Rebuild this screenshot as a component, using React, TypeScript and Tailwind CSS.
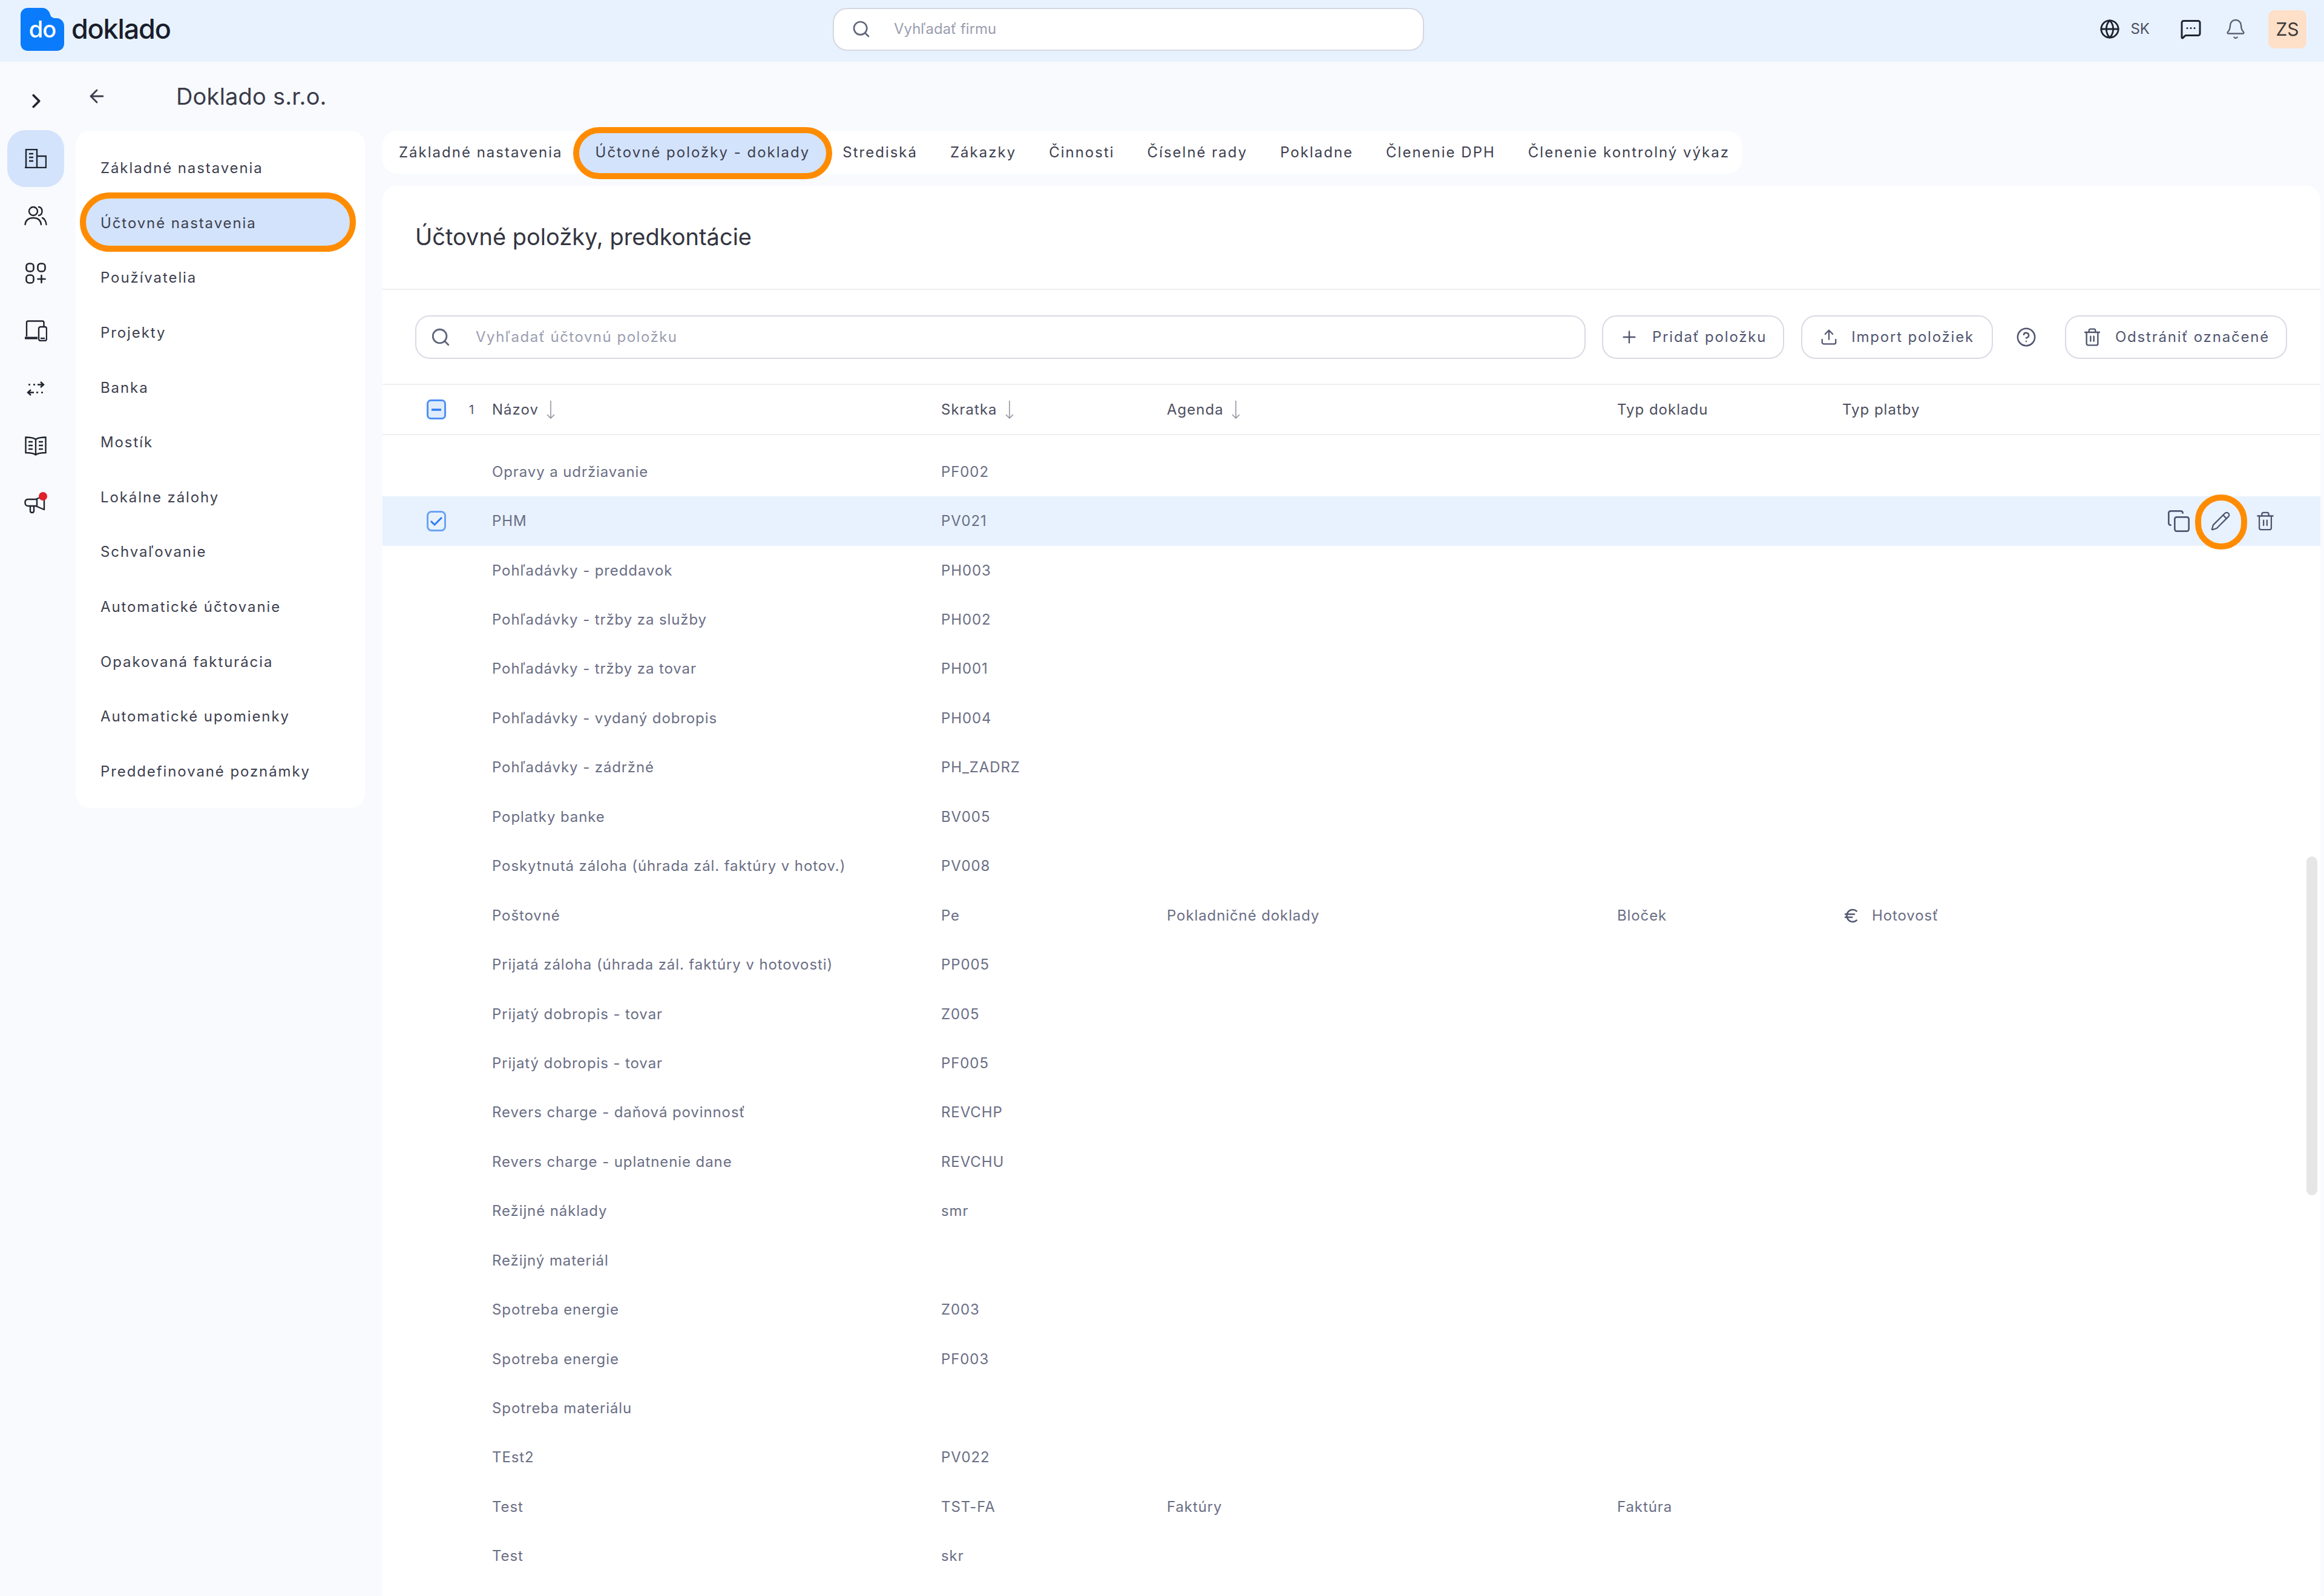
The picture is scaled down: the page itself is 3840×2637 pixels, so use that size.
import { ArrowLeft, Bell, ChevronRight, CircleHelp, Copy, Euro, Globe, MessageSquareMore, Pencil, Plus, Search, Trash2, Upload } from 'lucide-react'
import type { ReactNode } from 'react'

const navItems = ['Základné nastavenia', 'Účtovné nastavenia', 'Používatelia', 'Projekty', 'Banka', 'Mostík', 'Lokálne zálohy', 'Schvaľovanie', 'Automatické účtovanie', 'Opakovaná fakturácia', 'Automatické upomienky', 'Preddefinované poznámky']
const tabs = ['Základné nastavenia', 'Účtovné položky - doklady', 'Strediská', 'Zákazky', 'Činnosti', 'Číselné rady', 'Pokladne', 'Členenie DPH', 'Členenie kontrolný výkaz']

interface Row {
  name: string
  code?: string
  agenda?: string
  docType?: string
  payment?: string
  selected?: boolean
}

const rows: Row[] = [
  { name: 'Opravy a udržiavanie', code: 'PF002' },
  { name: 'PHM', code: 'PV021', selected: true },
  { name: 'Pohľadávky - preddavok', code: 'PH003' },
  { name: 'Pohľadávky - tržby za služby', code: 'PH002' },
  { name: 'Pohľadávky - tržby za tovar', code: 'PH001' },
  { name: 'Pohľadávky - vydaný dobropis', code: 'PH004' },
  { name: 'Pohľadávky - zádržné', code: 'PH_ZADRZ' },
  { name: 'Poplatky banke', code: 'BV005' },
  { name: 'Poskytnutá záloha (úhrada zál. faktúry v hotov.)', code: 'PV008' },
  { name: 'Poštovné', code: 'Pe', agenda: 'Pokladničné doklady', docType: 'Bloček', payment: 'Hotovosť' },
  { name: 'Prijatá záloha (úhrada zál. faktúry v hotovosti)', code: 'PP005' },
  { name: 'Prijatý dobropis - tovar', code: 'Z005' },
  { name: 'Prijatý dobropis - tovar', code: 'PF005' },
  { name: 'Revers charge - daňová povinnosť', code: 'REVCHP' },
  { name: 'Revers charge - uplatnenie dane', code: 'REVCHU' },
  { name: 'Režijné náklady', code: 'smr' },
  { name: 'Režijný materiál' },
  { name: 'Spotreba energie', code: 'Z003' },
  { name: 'Spotreba energie', code: 'PF003' },
  { name: 'Spotreba materiálu' },
  { name: 'TEst2', code: 'PV022' },
  { name: 'Test', code: 'TST-FA', agenda: 'Faktúry', docType: 'Faktúra' },
  { name: 'Test', code: 'skr' },
]

function Logo() {
  return (
    <div className="relative w-[72px] h-[71px] flex items-center justify-center">
      <svg className="absolute inset-0" width="72" height="71" viewBox="0 0 72 71">
        <path d="M12 0H36C42 0 47 4 49 11C50 15 53 17 59 17C67 17 72 23 72 30V59C72 66 67 71 60 71H12C5 71 0 66 0 59V12C0 5 5 0 12 0Z" fill="#0a7bfb" />
      </svg>
      <span className="relative text-white text-[38px] font-medium tracking-[-1px]">do</span>
    </div>
  )
}

function BuildingIcon() {
  return (
    <svg width="36" height="32" viewBox="0 0 36 32" fill="none" stroke="#1f2430" strokeWidth="2.4">
      <path d="M2 31V1H20V31M20 12H35V31M0 31H36" />
      <path d="M7 8H14M7 14H14M7 20H14" />
    </svg>
  )
}

function UsersIcon() {
  return (
    <svg width="38" height="33" viewBox="0 0 38 33" fill="none" stroke="#1f2430" strokeWidth="2.4" strokeLinecap="round">
      <circle cx="15" cy="9" r="7" />
      <path d="M24 2C28 2.500 29.500 5.500 29.500 9C29.500 12.500 28 15.500 24 16" />
      <path d="M1.500 31C2.500 23 8 20 15 20C22 20 27 23 28 31" />
      <path d="M30 20C33.500 21 36 26 36.500 31" />
    </svg>
  )
}

function AppsIcon() {
  return (
    <svg width="34" height="35" viewBox="0 0 34 35" fill="none" stroke="#1f2430" strokeWidth="2.6" strokeLinecap="round">
      <rect x="1.500" y="1.500" width="12" height="13" rx="4.500" />
      <rect x="20.500" y="1.500" width="12" height="13" rx="4.500" />
      <rect x="1.500" y="20.500" width="12" height="13" rx="4.500" />
      <path d="M26.500 21V33M20.500 27H32.500" />
    </svg>
  )
}

function DevicesIcon() {
  return (
    <svg width="38" height="35" viewBox="0 0 38 35" fill="none" stroke="#1f2430" strokeWidth="2.4">
      <path d="M4 27V4C4 2.500 5 1.500 6.500 1.500H30C31.500 1.500 32.500 2.500 32.500 4V10" />
      <path d="M1 29.500H22" strokeWidth="4" />
      <rect x="24" y="11" width="13" height="23" rx="3" />
      <path d="M27 30H34" />
    </svg>
  )
}

function TransferIcon() {
  return (
    <svg width="30" height="24" viewBox="0 0 30 24" fill="none" stroke="#1f2430" strokeWidth="2.4">
      <path d="M3 5.500H6M11 5.500H14M18 5.500H28M23 1L28 5.500L23 10" />
      <path d="M27 18.500H24M19 18.500H16M12 18.500H2M7 14L2 18.500L7 23" />
    </svg>
  )
}

function BookIcon() {
  return (
    <svg width="36" height="32" viewBox="0 0 36 32" fill="none" stroke="#1f2430" strokeWidth="2.400">
      <path d="M18 5C14 2 8 1.500 1.500 1.500V27C8 27 14 27.500 18 30.500C22 27.500 28 27 34.500 27V1.500C28 1.500 22 2 18 5Z" />
      <path d="M18 5V30M6 9H13M6 15H13M6 21H13M23 9H30M23 15H30M23 21H30" />
    </svg>
  )
}

function MegaphoneIcon() {
  return (
    <div className="relative w-[38px] h-[37px]">
      <svg width="36" height="34" viewBox="0 0 36 34" fill="none" stroke="#1f2430" strokeWidth="2.4" strokeLinejoin="round" className="absolute left-0 top-[3px]">
        <path d="M6 9H19L33 3V26L19 20H6C3 20 1.500 17.500 1.500 14.500C1.500 11.500 3 9 6 9Z" />
        <path d="M10 20V28C10 30 11 31 13 31C15 31 16 30 16 28V20M21 9V20" />
      </svg>
      <span className="absolute right-0 top-0 w-[14px] h-[14px] rounded-full bg-[#e0212b]" />
    </div>
  )
}

function SortArrow() {
  return (
    <svg width="14" height="30" viewBox="0 0 14 30" fill="none" stroke="#8d8f9b" strokeWidth="1.5">
      <path d="M7 0V29M1 23L7 29L13 23" />
    </svg>
  )
}

function CheckMinus() {
  return (
    <span className="w-[32px] h-[33px] rounded-[7px] border-[3px] border-[#4d90f5] bg-[#e0ecfd] flex items-center justify-center">
      <svg width="20" height="20" viewBox="0 0 20 20" fill="none" stroke="#2f7cf0" strokeWidth="3.5">
        <path d="M2 10H18" />
      </svg>
    </span>
  )
}

function CheckTick() {
  return (
    <span className="w-[32px] h-[34px] rounded-[8px] border-[3px] border-[#6ba3f7] flex items-center justify-center">
      <svg width="22" height="20" viewBox="0 0 22 20" fill="none" stroke="#2f7cf0" strokeWidth="3">
        <path d="M2 10L8 16L20 4" />
      </svg>
    </span>
  )
}

function OutlineButton({ icon, children, wide }: { icon: ReactNode; children: ReactNode; wide?: boolean }) {
  return (
    <div className={`h-[72px] rounded-[24px] border-2 border-[#d9dae4] bg-white flex items-center gap-[22px] text-[24px] text-[#50556f] tracking-[1.8px] whitespace-nowrap ${wide ? 'px-[29px]' : 'px-[27px]'}`}>
      {icon}
      {children}
    </div>
  )
}

function HeadCell({ children, sort }: { children: ReactNode; sort?: boolean }) {
  return (
    <div className="flex items-center gap-[13px] text-[24px] text-[#4c4e5e] tracking-[1px]">
      {children}
      {sort && <SortArrow />}
    </div>
  )
}

function RailSlot({ children }: { children: ReactNode }) {
  return <div className="h-[95px] flex items-center justify-center">{children}</div>
}

const gridCols = 'grid grid-cols-[181px_742px_373px_744px_372px_1fr] items-center'

export default function App() {
  return (
    <div className="w-[3840px] h-[2637px] overflow-hidden bg-[#f8fafd] font-['Inter',sans-serif]">
      {/* top bar */}
      <header className="h-[102px] bg-[#e8f2fe] flex items-center pl-[34px] pr-[29px] pb-[6px]">
        <div className="w-[1342px] flex items-center gap-[12px]">
          <Logo />
          <span className="text-[45px] font-medium text-[#1a1d2b] tracking-[-1.2px]">doklado</span>
        </div>
        <div className="w-[977px] h-[71px] rounded-[24px] bg-white border-2 border-[#d5d7e2] flex items-center pl-[29px] gap-[38px]">
          <Search size={32} strokeWidth={2} className="text-[#62667c]" />
          <span className="text-[24px] text-[#9a9db0]">Vyhľadať firmu</span>
        </div>
        <div className="ml-auto flex items-center">
          <Globe size={34} strokeWidth={2} className="text-[#1f2430]" />
          <span className="ml-[17px] text-[24px] text-[#4c4e5e]">SK</span>
          <MessageSquareMore size={36} strokeWidth={2} className="ml-[50px] text-[#1f2430]" />
          <Bell size={36} strokeWidth={1.6} className="ml-[38px] text-[#5b6075]" />
          <div className="ml-[36px] w-[63px] h-[63px] rounded-[10px] bg-[#fedfc8] flex items-center justify-center text-[30px] text-[#3a3a3a]">ZS</div>
        </div>
      </header>

      <div className="flex">
        {/* icon rail */}
        <aside className="w-[125px] shrink-0 flex flex-col items-center pt-[46px]">
          <ChevronRight size={38} strokeWidth={2.4} className="text-[#1f2430] -ml-[6px]" />
          <div className="mt-[29px] -ml-[8px] w-[94px] h-[94px] rounded-[30px] bg-[#d3e3fb] flex items-center justify-center">
            <BuildingIcon />
          </div>
          <div className="flex flex-col items-center -ml-[8px]">
            <RailSlot><UsersIcon /></RailSlot>
            <RailSlot><AppsIcon /></RailSlot>
            <RailSlot><DevicesIcon /></RailSlot>
            <RailSlot><TransferIcon /></RailSlot>
            <RailSlot><BookIcon /></RailSlot>
            <RailSlot><MegaphoneIcon /></RailSlot>
          </div>
        </aside>

        <div className="flex-1 min-w-0 pr-[6px]">
          {/* company heading */}
          <div className="h-[114px] flex items-center gap-[114px] pl-[18px]">
            <ArrowLeft size={34} strokeWidth={2} className="text-[#3a3d4c]" />
            <h1 className="text-[38px] text-[#3a3c4a] tracking-[0.2px] font-normal">Doklado s.r.o.</h1>
          </div>

          <div className="flex gap-[29px] items-start">
            {/* settings nav */}
            <nav className="w-[478px] shrink-0 bg-white rounded-[24px] pt-[17px] pb-[15px]">
              {navItems.map((item, i) => (
                <div key={item} className="relative h-[90.6px] flex items-center px-[41px] text-[24px] text-[#3d3f4f] tracking-[1.9px] whitespace-nowrap">
                  {i === 1 && (
                    <span className="absolute left-[7px] right-[15px] top-[-6px] bottom-[-2px] rounded-[50px] border-[10px] border-[#ff8c00] bg-[#d3e3fb]" />
                  )}
                  <span className="relative">{item}</span>
                </div>
              ))}
            </nav>

            <div className="flex-1 min-w-0">
              {/* tabs */}
              <div className="w-[2246px] h-[71px] bg-white rounded-[24px] flex items-center text-[24px] text-[#3d3f4f] tracking-[2px]">
                {tabs.map((tab, i) => (
                  <div key={tab} className="relative h-full flex items-center px-[27px] whitespace-nowrap">
                    {i === 1 && (
                      <span className="absolute left-[-10px] right-[-10px] top-[-6px] bottom-[-9px] rounded-[44px] border-[10px] border-[#ff8c00] bg-[#d3e3fb]" />
                    )}
                    <span className="relative">{tab}</span>
                  </div>
                ))}
              </div>

              {/* main panel */}
              <section className="relative mt-[20px] h-[2330px] bg-white rounded-t-[24px] overflow-hidden">
                <div className="h-[172px] flex items-center pl-[54px] pb-[2px] border-b-2 border-[#eeeff3]">
                  <h2 className="text-[38px] text-[#33353f] font-normal">Účtovné položky, predkontácie</h2>
                </div>
                <div className="h-[157px] flex items-center pl-[54px] pr-[55px] border-b-2 border-[#eeeff3]">
                  <div className="w-[1934px] h-[72px] rounded-[24px] border-2 border-[#d9dae4] flex items-center pl-[23px] gap-[41px]">
                    <Search size={34} strokeWidth={2} className="text-[#62667c]" />
                    <span className="text-[24px] text-[#9a9db0] tracking-[1.5px]">Vyhľadať účtovnú položku</span>
                  </div>
                  <div className="ml-[27px]">
                    <OutlineButton icon={<Plus size={32} strokeWidth={1.8} />}>Pridať položku</OutlineButton>
                  </div>
                  <div className="ml-[28px]">
                    <OutlineButton wide icon={<Upload size={30} strokeWidth={1.8} />}>Import položiek</OutlineButton>
                  </div>
                  <CircleHelp size={34} strokeWidth={1.8} className="ml-[38px] text-[#50556f]" />
                  <div className="ml-auto">
                    <OutlineButton icon={<Trash2 size={32} strokeWidth={1.8} />}>Odstrániť označené</OutlineButton>
                  </div>
                </div>

                {/* table head */}
                <div className={`${gridCols} h-[83px] border-b-2 border-[#eeeff3]`}>
                  <div className="flex items-center pl-[73px] gap-[38px]">
                    <CheckMinus />
                    <span className="text-[20px] text-[#4c4e5e]">1</span>
                  </div>
                  <HeadCell sort>Názov</HeadCell>
                  <HeadCell sort>Skratka</HeadCell>
                  <HeadCell sort>Agenda</HeadCell>
                  <HeadCell>Typ dokladu</HeadCell>
                  <HeadCell>Typ platby</HeadCell>
                </div>

                {/* table rows */}
                <div className="pt-[20px]">
                  {rows.map((row, i) => (
                    <div key={i} className={`${gridCols} h-[81.45px] text-[24px] text-[#6a6e85] tracking-[0.9px] ${row.selected ? 'bg-[#e8f2fe]' : ''}`}>
                      <div className="pl-[73px] flex items-center">
                        {row.selected && <CheckTick />}
                      </div>
                      <div className="whitespace-nowrap">{row.name}</div>
                      <div>{row.code}</div>
                      <div>{row.agenda}</div>
                      <div>{row.docType}</div>
                      <div className="flex items-center h-full">
                        {row.payment && (
                          <span className="flex items-center gap-[19px]">
                            <Euro size={30} strokeWidth={2} className="text-[#50556f]" />
                            {row.payment}
                          </span>
                        )}
                        {row.selected && (
                          <div className="ml-auto mr-[74px] flex items-center text-[#50556f]">
                            <Copy size={40} strokeWidth={1.6} />
                            <span className="relative ml-[32px]">
                              <Pencil size={34} strokeWidth={1.6} />
                              <span className="absolute left-[-25px] top-[-27px] w-[86px] h-[91px] rounded-full border-[10px] border-[#ff8c00]" />
                            </span>
                            <Trash2 size={34} strokeWidth={1.6} className="ml-[40px]" />
                          </div>
                        )}
                      </div>
                    </div>
                  ))}
                </div>

                {/* scrollbar thumb */}
                <div className="absolute right-[5px] top-[1108px] w-[18px] h-[560px] rounded-full bg-[#e6e6e6]" />
              </section>
            </div>
          </div>
        </div>
      </div>
    </div>
  )
}
